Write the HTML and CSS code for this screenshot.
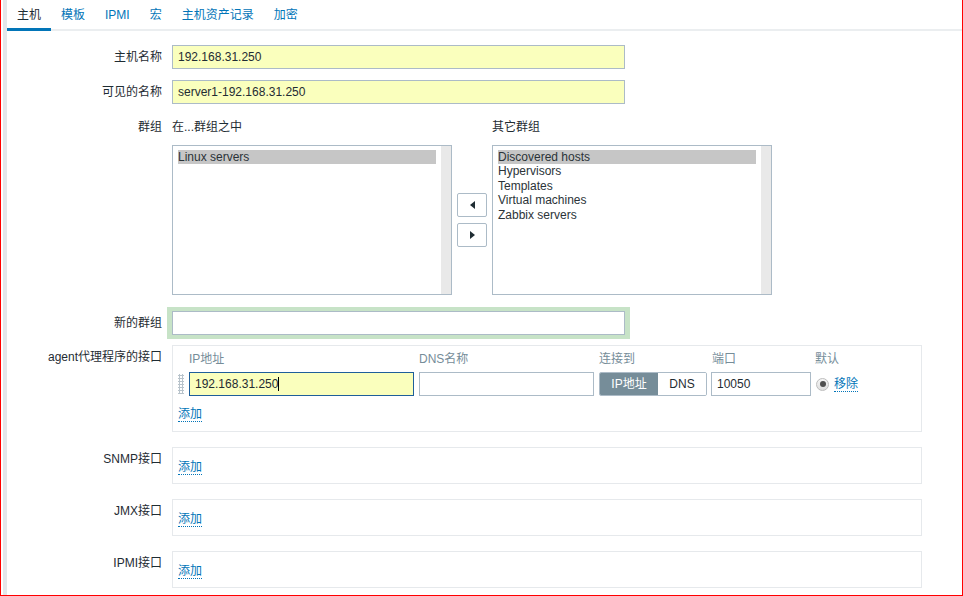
FILE: index.html
```html
<!DOCTYPE html>
<html lang="zh-CN">
<head>
<meta charset="utf-8">
<title>主机</title>
<link rel="stylesheet" href="styles.css">
</head>
<body>
<div class="frame">
  <div class="strip"></div>
  <div class="page">
    <ul class="tabs">
      <li class="tab active">主机</li>
      <li class="tab">模板</li>
      <li class="tab">IPMI</li>
      <li class="tab">宏</li>
      <li class="tab">主机资产记录</li>
      <li class="tab">加密</li>
    </ul>

    <div class="row row-first">
      <div class="label label-mid">主机名称</div>
      <div class="field"><div class="input wide filled">192.168.31.250</div></div>
    </div>

    <div class="row">
      <div class="label label-mid">可见的名称</div>
      <div class="field"><div class="input wide filled">server1-192.168.31.250</div></div>
    </div>

    <div class="row">
      <div class="label label-mid">群组</div>
      <div class="field groups">
        <div class="group-col">
          <div class="group-head">在...群组之中</div>
          <div class="listbox">
            <div class="list-items">
              <div class="item selected">Linux servers</div>
            </div>
            <div class="list-scroll"></div>
          </div>
        </div>
        <div class="move-btns">
          <div class="btn-arrow"><span class="tri tri-left"></span></div>
          <div class="btn-arrow"><span class="tri tri-right"></span></div>
        </div>
        <div class="group-col">
          <div class="group-head">其它群组</div>
          <div class="listbox">
            <div class="list-items">
              <div class="item selected">Discovered hosts</div>
              <div class="item">Hypervisors</div>
              <div class="item">Templates</div>
              <div class="item">Virtual machines</div>
              <div class="item">Zabbix servers</div>
            </div>
            <div class="list-scroll"></div>
          </div>
        </div>
      </div>
    </div>

    <div class="row row-newgroup">
      <div class="label label-mid">新的群组</div>
      <div class="field"><div class="input wide glow"></div></div>
    </div>

    <div class="row row-agent">
      <div class="label label-top">agent代理程序的接口</div>
      <div class="field">
        <div class="iface-box agent-box">
          <div class="iface-grid">
            <div></div>
            <div class="col-head">IP地址</div>
            <div class="col-head">DNS名称</div>
            <div class="col-head">连接到</div>
            <div class="col-head">端口</div>
            <div class="col-head">默认</div>

            <div class="grip"></div>
            <div class="input ip focused filled">192.168.31.250<span class="caret"></span></div>
            <div class="input dns"></div>
            <div class="segmented">
              <span class="seg seg-on">IP地址</span><span class="seg">DNS</span>
            </div>
            <div class="input port">10050</div>
            <div class="default-cell">
              <span class="radio"><span class="radio-dot"></span></span>
              <a class="link">移除</a>
            </div>
          </div>
          <div class="add-line"><a class="link">添加</a></div>
        </div>
      </div>
    </div>

    <div class="row row-iface">
      <div class="label label-top">SNMP接口</div>
      <div class="field"><div class="iface-box small-box"><a class="link">添加</a></div></div>
    </div>

    <div class="row row-iface">
      <div class="label label-top">JMX接口</div>
      <div class="field"><div class="iface-box small-box"><a class="link">添加</a></div></div>
    </div>

    <div class="row row-iface row-last">
      <div class="label label-top">IPMI接口</div>
      <div class="field"><div class="iface-box small-box"><a class="link">添加</a></div></div>
    </div>
  </div>
</div>
</body>
</html>
```

FILE: styles.css
```css
* {
  box-sizing: border-box;
}

html, body {
  margin: 0;
  padding: 0;
  background: #ffffff;
}

body {
  font-family: "Liberation Sans", Arial, "Noto Sans CJK SC", sans-serif;
  font-size: 12px;
  color: #1f2c33;
}

.frame {
  width: 963px;
  height: 596px;
  border-left: 1px solid #ff0000;
  border-right: 1px solid #ff0000;
  border-bottom: 1px solid #ff0000;
  padding-left: 2px;
  display: flex;
  overflow: hidden;
}

.strip {
  width: 4px;
  flex: none;
  background: #e3e7eb;
}

.page {
  flex: 1;
  min-width: 0;
}

/* tabs */
.tabs {
  list-style: none;
  margin: 0;
  padding: 0;
  display: flex;
  height: 31px;
  border-bottom: 2px solid #ebeef0;
}

.tab {
  padding: 2px 10px 0;
  height: 31px;
  line-height: 26px;
  font-size: 12px;
  color: #0275b8;
  border-bottom: 3px solid transparent;
  margin-bottom: -2px;
}

.tab.active {
  color: #1f2c33;
  border-bottom-color: #0275b8;
}

/* rows */
.row {
  display: flex;
  margin-top: 11px;
}

.row-first {
  margin-top: 14px;
}

.row-newgroup {
  margin-top: 16px;
}

.row-agent {
  margin-top: 10px;
}

.row-iface {
  margin-top: 15px;
}

.label {
  width: 155px;
  flex: none;
  text-align: right;
  white-space: nowrap;
}

.label-mid {
  line-height: 24px;
}

.label-top {
  line-height: 14px;
  padding-top: 5px;
}

.field {
  margin-left: 10px;
}

/* inputs */
.input {
  height: 24px;
  line-height: 22px;
  border: 1px solid #acbbc7;
  background: #ffffff;
  padding: 0 5px;
  white-space: nowrap;
  overflow: hidden;
}

.input.filled {
  background: #faffbd;
}

.input.wide {
  width: 453px;
}

.input.glow {
  box-shadow: 1px 0 0 4px #c7e3c7, -1px 0 0 4px #c7e3c7;
}

.input.focused {
  border-color: #1f5f9a;
}

.caret {
  display: inline-block;
  width: 1px;
  height: 14px;
  background: #000000;
  vertical-align: -3px;
}

/* groups */
.groups {
  display: flex;
}

.group-col {
  width: 280px;
}

.group-head {
  line-height: 24px;
  height: 24px;
}

.listbox {
  margin-top: 6px;
  height: 150px;
  border: 1px solid #acbbc7;
  display: flex;
  background: #ffffff;
}

.list-items {
  flex: 1;
  padding: 4px 5px 0;
}

.item {
  height: 14.4px;
  line-height: 14px;
  white-space: nowrap;
  color: #2b3338;
}

.item.selected {
  background: #c6c6c6;
}

.list-scroll {
  width: 10px;
  background: #e9e9e9;
}

.move-btns {
  width: 40px;
  padding: 0 5px;
  display: flex;
  flex-direction: column;
  justify-content: center;
  gap: 6px;
  margin-top: 30px;
}

.btn-arrow {
  width: 30px;
  height: 24px;
  border: 1px solid #acbbc7;
  border-radius: 2px;
  background: #ffffff;
  display: flex;
  align-items: center;
  justify-content: center;
}

.tri {
  width: 0;
  height: 0;
  border-top: 4px solid transparent;
  border-bottom: 4px solid transparent;
}

.tri-left {
  border-right: 5px solid #1f2c33;
}

.tri-right {
  border-left: 5px solid #1f2c33;
}

/* interface boxes */
.iface-box {
  width: 750px;
  border: 1px solid #e6e9ec;
  padding-left: 5px;
}

.agent-box {
  padding-top: 5px;
  padding-bottom: 9px;
  height: 87px;
}

.small-box {
  height: 37px;
  padding-top: 12px;
}

.iface-grid {
  display: grid;
  grid-template-columns: 6px 225px 175px 108px 99px auto;
  grid-template-rows: 16px 24px;
  column-gap: 5px;
  row-gap: 5px;
  align-items: center;
}

.col-head {
  color: #768d99;
  line-height: 16px;
  white-space: nowrap;
}

.col-head:nth-child(6) {
  margin-left: -1px;
}

.grip {
  width: 6px;
  height: 20px;
  background-image: radial-gradient(circle, #b8c3cb 1px, transparent 1.2px);
  background-size: 3px 3px;
  background-position: 0 0;
}

.input.ip {
  width: 225px;
}

.input.dns {
  width: 175px;
}

.input.port {
  width: 100px;
  margin-left: -1px;
}

.segmented {
  display: flex;
  height: 24px;
  width: 108px;
  border: 1px solid #acbbc7;
  border-radius: 2px;
  overflow: hidden;
}

.seg {
  flex: none;
  width: 48px;
  text-align: center;
  line-height: 22px;
  color: #1f2c33;
  background: #ffffff;
}

.seg.seg-on {
  width: 58px;
  background: #768d99;
  color: #ffffff;
}

.default-cell {
  display: flex;
  align-items: center;
  gap: 5px;
}

.radio {
  width: 13px;
  height: 13px;
  border-radius: 50%;
  border: 1px solid #bdbdbd;
  background: linear-gradient(#f6f6f6, #dedede);
  display: flex;
  align-items: center;
  justify-content: center;
}

.radio-dot {
  width: 6px;
  height: 6px;
  border-radius: 50%;
  background: #505050;
}

.link {
  color: #0275b8;
  text-decoration: none;
  border-bottom: 1px dotted #0275b8;
  line-height: 14px;
  display: inline-block;
}

.add-line {
  margin-top: 10px;
  line-height: 16px;
}
```
